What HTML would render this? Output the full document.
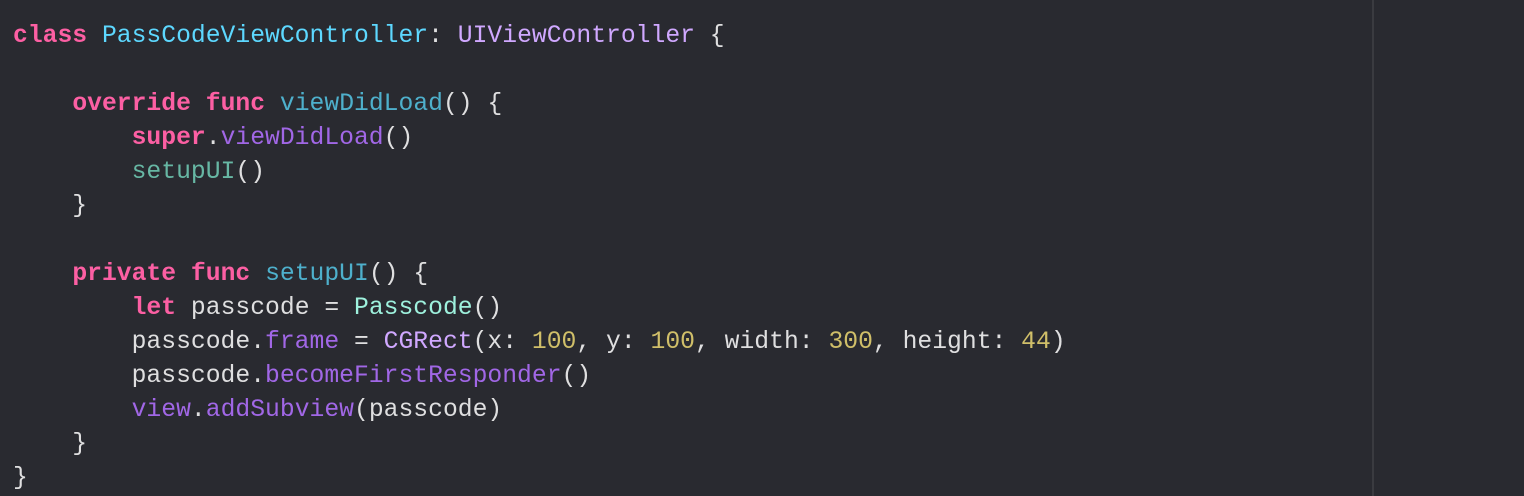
<!DOCTYPE html>
<html><head><meta charset="utf-8"><style>
html,body{margin:0;padding:0;background:#292a30;width:1524px;height:496px;overflow:hidden}
.v{position:absolute;left:1372px;top:0;width:2px;height:496px;background:#3a3b40}
pre{position:absolute;left:13px;top:19px;margin:0;font-family:"Liberation Mono",monospace;font-size:24.7px;line-height:34px;color:#dfdfe0;letter-spacing:0.01px}
.k{color:#fc5fa3;font-weight:bold}
.d{color:#5dd8ff}
.t{color:#d0a8ff}
.f{color:#4eb0cc}
.m{color:#a167e6}
.p{color:#67b7a4}
.c{color:#9ef1dd}
.n{color:#d0bf69}
</style></head><body><div class="v"></div><pre><span class="k">class</span> <span class="d">PassCodeViewController</span>: <span class="t">UIViewController</span> {

    <span class="k">override</span> <span class="k">func</span> <span class="f">viewDidLoad</span>() {
        <span class="k">super</span>.<span class="m">viewDidLoad</span>()
        <span class="p">setupUI</span>()
    }

    <span class="k">private</span> <span class="k">func</span> <span class="f">setupUI</span>() {
        <span class="k">let</span> passcode = <span class="c">Passcode</span>()
        passcode.<span class="m">frame</span> = <span class="t">CGRect</span>(x: <span class="n">100</span>, y: <span class="n">100</span>, width: <span class="n">300</span>, height: <span class="n">44</span>)
        passcode.<span class="m">becomeFirstResponder</span>()
        <span class="m">view</span>.<span class="m">addSubview</span>(passcode)
    }
}</pre></body></html>
